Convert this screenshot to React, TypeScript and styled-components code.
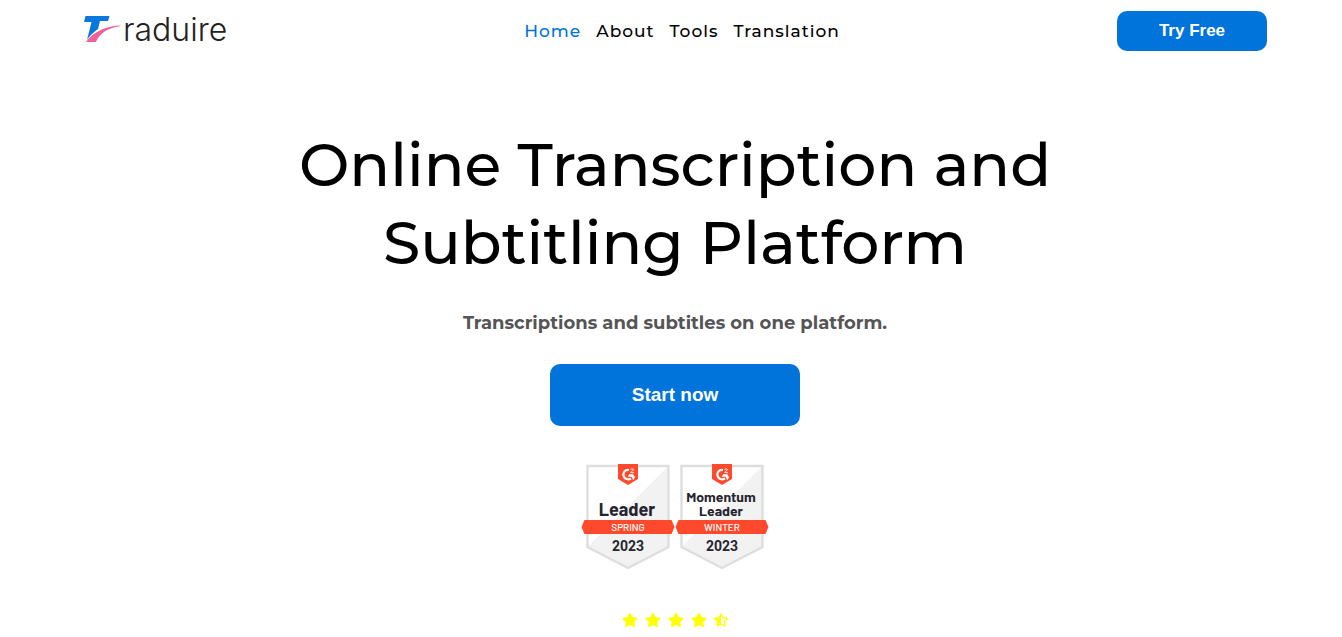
import React from "react";
import styled, { createGlobalStyle } from "styled-components";
import { FaStar, FaStarHalfAlt } from "react-icons/fa";

const GlobalStyle = createGlobalStyle`
  * { box-sizing: border-box; }
  body {
    margin: 0;
    background: #fff;
    color: #000;
    font-family: Montserrat, Inter, sans-serif;
  }
`;

const Header = styled.header`
  display: grid;
  grid-template-columns: 1fr auto 1fr;
  align-items: center;
  height: 62px;
  padding: 0 75px;
`;

const Logo = styled.a`
  display: flex;
  align-items: center;
  gap: 2px;
  padding: 0 0 2px 8px;
  color: #222;
  font-family: Inter, sans-serif;
  font-size: 32px;
  font-weight: 300;
  font-optical-sizing: none;
  line-height: 36px;
  text-decoration: none;
`;

const Nav = styled.nav`
  display: flex;
  gap: 15px;
  padding-left: 22px;
`;

const NavLink = styled.a<{ $active?: boolean }>`
  color: ${({ $active }) => ($active ? "#0074db" : "#000")};
  font-size: 17px;
  font-weight: 500;
  line-height: 24px;
  letter-spacing: 1px;
  text-decoration: none;
`;

const Button = styled.button<{ $large?: boolean }>`
  width: ${({ $large }) => ($large ? "250px" : "150px")};
  height: ${({ $large }) => ($large ? "62px" : "40px")};
  padding: 0;
  border: 0;
  border-radius: 10px;
  background: #0074db;
  color: #fff;
  font-family: "Liberation Sans", Arial, sans-serif;
  font-size: ${({ $large }) => ($large ? "19px" : "17px")};
  font-weight: 700;
  cursor: pointer;
`;

const HeaderAction = styled.div`
  display: flex;
  justify-content: flex-end;
`;

const Hero = styled.main`
  display: flex;
  flex-direction: column;
  align-items: center;
  padding: 64px 0 8px 8px;
`;

const Title = styled.h1`
  max-width: 900px;
  margin: 0;
  font-size: 60px;
  font-weight: 500;
  line-height: 78px;
  text-align: center;
`;

const Subtitle = styled.p`
  margin: 28px 0;
  color: #555;
  font-size: 18px;
  font-weight: 700;
  line-height: 26px;
`;

const Badges = styled.div`
  display: flex;
  margin-top: 38px;
`;

const BadgeDrawing = styled.svg`
  display: block;
  font-family: Barlow, Inter, sans-serif;
  text-anchor: middle;
`;

const BadgeYear = styled.text`
  font-family: Roboto, sans-serif;
  font-size: 14px;
  font-weight: 700;
`;

const Stars = styled.div`
  display: flex;
  align-items: center;
  gap: 7px;
  margin-top: 42px;
  color: #ff0;
`;

function LogoMark() {
  return (
    <svg width="38" height="28" viewBox="0 0 38 28" aria-hidden="true">
      <path d="M2.500 0h24l-1.500 5h-8l-2 8C10 17 6 20 4 24l4.500-18H1Z" fill="#0878dc" />
      <path d="M37.500 9.500C25 9.500 9 16 3 26h10c3-8 11-14 24.500-16Z" fill="#ee6099" />
    </svg>
  );
}

type BadgeProps = { lines: string[]; season: string; year: string };

function Badge({ lines, season, year }: BadgeProps) {
  const single = lines.length === 1;
  return (
    <BadgeDrawing width="94" height="106" viewBox="0 0 94 106" role="img">
      <path d="M6.500 2H87.500v81L47 104 6.500 83Z" fill="#fff" />
      <path d="M87.500 2v81L47 104 6.500 83Z" fill="#f2f2f2" />
      <path d="M6.500 2H87.500v81L47 104 6.500 83Z" fill="none" stroke="#dedede" strokeWidth="2.400" />
      <path d="M37 0h20v15l-10 6-10-6Z" fill="#ff492c" />
      <path d="M48 6a4.700 4.700 0 1 0 2 8.300" fill="none" stroke="#fff" strokeWidth="2.200" />
      <path d="M48.200 10.200h4l1.800 3-1.700 3-1.800-3.500H46.800Z" fill="#fff" />
      <path d="M49.700 5.700c.5-1.300 2.900-1.200 2.700.2-.2.900-2.300 1.300-2.600 2.800h3" fill="none" stroke="#fff" strokeWidth="1" />
      {lines.map((line, i) => (
        <text
          key={line}
          x="46"
          y={single ? 52 : 38 + i * 14}
          fontSize={single ? 18 : 14}
          fontWeight="700"
          fill="#252530"
        >
          {line}
        </text>
      ))}
      <path d="M3.500 56h87l3 7-3 7h-87L.5 63Z" fill="#ff492c" />
      <text x="47" y="67" fontSize="10" fontWeight="500" fill="#fff">{season}</text>
      <BadgeYear x="47" y="87" fill="#252530">{year}</BadgeYear>
    </BadgeDrawing>
  );
}

export default function App() {
  return (
    <>
      <GlobalStyle />
      <Header>
        <Logo href="#">
          <LogoMark />
          <span>raduire</span>
        </Logo>
        <Nav>
          <NavLink href="#" $active>Home</NavLink>
          <NavLink href="#about">About</NavLink>
          <NavLink href="#tools">Tools</NavLink>
          <NavLink href="#translation">Translation</NavLink>
        </Nav>
        <HeaderAction>
          <Button type="button">Try Free</Button>
        </HeaderAction>
      </Header>
      <Hero>
        <Title>Online Transcription and Subtitling Platform</Title>
        <Subtitle>Transcriptions and subtitles on one platform.</Subtitle>
        <Button type="button" $large>Start now</Button>
        <Badges>
          <Badge lines={["Leader"]} season="SPRING" year="2023" />
          <Badge lines={["Momentum", "Leader"]} season="WINTER" year="2023" />
        </Badges>
        <Stars role="img" aria-label="4.5 out of 5 stars">
          <FaStar size={16} />
          <FaStar size={16} />
          <FaStar size={16} />
          <FaStar size={16} />
          <FaStarHalfAlt size={14} />
        </Stars>
      </Hero>
    </>
  );
}
